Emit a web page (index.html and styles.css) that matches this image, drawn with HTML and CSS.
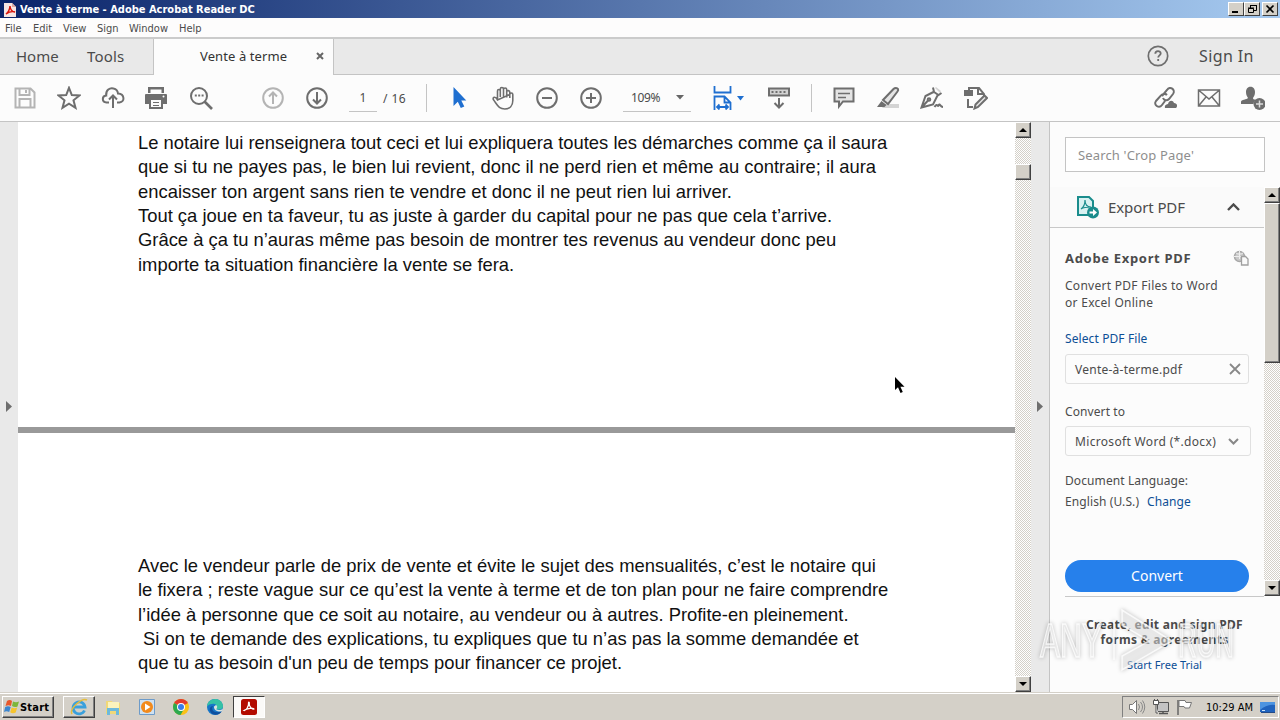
FILE: index.html
```
<!DOCTYPE html>
<html lang="en">
<head>
  <meta charset="UTF-8">
  <title>Vente à terme - Adobe Acrobat Reader DC</title>
  <link rel="stylesheet" href="styles.css">
</head>
<body>

<!-- Title bar -->
<div class="titlebar">
  <svg class="app-icon" width="12" height="15" viewBox="0 0 12 15"><path d="M0 1h8l4 4v10H0z" fill="#f6e6e4"/><path d="M8 1l4 4H8z" fill="#d9a9a4"/><path d="M2 12c2-1 4-5 4-8 0 3 2 6 5 6-3-1-6 0-9 2z" fill="none" stroke="#d8160c" stroke-width="1.5"/></svg>
  <span class="title-text">Vente à terme - Adobe Acrobat Reader DC</span>
  <div class="win-buttons">
    <span class="win-btn"><svg width="14" height="12"><path d="M3 9h6" stroke="#000" stroke-width="2"/></svg></span>
    <span class="win-btn"><svg width="14" height="12"><path d="M5.500 5V2.500h6v5H9M5 2.500h7" fill="none" stroke="#000"/><path d="M3.500 5.500h5v4h-5zM3 5h6" fill="none" stroke="#000"/></svg></span>
    <span class="win-btn close"><svg width="14" height="12"><path d="M3.500 2.500l7 7M10.500 2.500l-7 7" stroke="#000" stroke-width="1.700"/></svg></span>
  </div>
</div>

<!-- Menu -->
<div class="menubar">
  <span class="m-file">File</span><span class="m-edit">Edit</span><span class="m-view">View</span><span class="m-sign">Sign</span><span class="m-window">Window</span><span class="m-help">Help</span>
</div>

<!-- Tabs -->
<div class="tabs">
  <div class="tab-left"><span class="t-home">Home</span><span class="t-tools">Tools</span></div>
  <div class="tab-active"><span class="t-doc">Vente à terme</span><svg width="8" height="8"><path d="M1 1l6 6M7 1l-6 6" stroke="#666" stroke-width="2"/></svg></div>
  <div class="tab-right">
    <svg class="help" width="22" height="22" viewBox="0 0 22 22"><circle cx="11" cy="11" r="9.700" fill="none" stroke="#6e6e6e" stroke-width="1.700"/><path d="M8.300 8.700c0-3.500 5.400-3.300 5.400-.3 0 2-2.500 2-2.500 4.200M11.200 14v2" fill="none" stroke="#6e6e6e" stroke-width="1.800"/></svg>
    <span class="t-signin">Sign In</span>
  </div>
</div>

<!-- Toolbar -->
<div class="toolbar">
  <span class="tool off"><svg viewBox="0 0 24 24"><path d="M2.500 2.500h15l4 4v15h-19zM6.500 3v6h10V3M13 4v3M6.500 21v-8h11v8"/></svg></span>
  <span class="tool"><svg viewBox="0 0 24 24"><path d="M12 1.800l2.800 7.200 7.700.5-6 4.800 2 7.500L12 17.600l-6.500 4.200 2-7.500-6-4.800 7.700-.5z"/></svg></span>
  <span class="tool"><svg viewBox="0 0 24 24"><path d="M8 16.500H5.500C.5 16 .8 10 5.200 9.500 4.500 4 9 1.500 12.500 2.500c3 .6 4.200 2.500 4.500 5 7 .5 7 8.500 1.500 9H16M12 22V10M8 13.500l4-4 4 4"/></svg></span>
  <span class="tool print"><svg viewBox="0 0 24 24"><path class="solid" d="M4 1h16v6H4zM1 9q0-1 1-1h20q1 0 1 1v9H1z"/><path class="paper" d="M6.500 3.500h11V7h-11z"/><path d="M6 13h12v9H6z" class="sheet"/><path d="M9 16.500h6M9 19.500h6" stroke-width="1.200"/><circle cx="19.500" cy="10.500" r="1" fill="#fff" stroke="none"/></svg></span>
  <span class="tool"><svg viewBox="0 0 24 24"><circle cx="10" cy="10" r="8"/><path d="M15.500 15.500l7.500 7.500" stroke-width="2.700"/><path d="M5.800 9.500h2m1.400 0h2m1.400 0h2"/></svg></span>

  <span class="tool off nav"><svg viewBox="0 0 24 24"><circle cx="12" cy="12" r="9.800"/><path d="M12 18V7M8 10.500l4-4 4 4"/></svg></span>
  <span class="tool"><svg viewBox="0 0 24 24"><circle cx="12" cy="12" r="9.800"/><path d="M12 6v11M8 13.500l4 4 4-4"/></svg></span>
  <span class="page-input">1</span><span class="page-total">/ 16</span>
  <i class="sep"></i>

  <span class="tool"><svg viewBox="0 0 24 24"><path d="M6.500 1v19l4.300-4.300 3 6.300 3.500-1.600-3-6h5z" fill="#1f6fd0" stroke="none"/></svg></span>
  <span class="tool"><svg viewBox="0 0 24 24"><path d="M6.500 14V5c0-2 2.800-2 2.800 0v6V3c0-2 3.200-2 3.200 0v8V3.500c0-2 3.200-2 3.200 0V11.500M15.700 6c0-2 3.100-1.800 3.100.2V12M18.800 8.500c0-2 3-1.800 3 0v6c0 5-3 8.500-8 8.500-6 0-7-3.500-11.500-9.500C1.500 11 4.500 10 6.500 14z" stroke-width="1.600"/></svg></span>
  <span class="tool"><svg viewBox="0 0 24 24"><circle cx="12" cy="12" r="9.800"/><path d="M7 12h10"/></svg></span>
  <span class="tool"><svg viewBox="0 0 24 24"><circle cx="12" cy="12" r="9.800"/><path d="M7 12h10M12 7v10"/></svg></span>
  <span class="zoom-box"><span class="zoom-val">109%</span><svg width="8" height="5"><path d="M0 0h8L4 4.500z" fill="#666"/></svg></span>
  <span class="fit"><svg class="fit-icon" width="19" height="24" viewBox="0 0 19 24"><path d="M1.500 0v6.500h16V0M1.500 24V10.500h10l6 6V24M11.500 10.500v6h6M4 21h11M6.500 18.500L4 21l2.500 2.500M12.500 18.500L15 21l-2.500 2.500" fill="none" stroke="#1f6fd0" stroke-width="1.800"/></svg><svg width="7" height="5"><path d="M0 0h7L3.500 4.500z" fill="#1f6fd0"/></svg></span>
  <span class="tool"><svg viewBox="0 0 24 24"><path d="M2 2.500h20v7H2z" fill="#d2d2d2"/><path d="M4.500 6h2m2 0h2m2 0h2m2 0h2M12 12v9M7.500 17l4.500 4.500 4.500-4.500"/></svg></span>
  <i class="sep second"></i>

  <span class="tool"><svg viewBox="0 0 24 24"><path d="M2.500 2.500h19v13H11L7 20.500v-5H2.500z" fill="#e4e4e4"/><path d="M6 7.500h12M6 11.500h8" stroke-width="1.600"/></svg></span>
  <span class="tool"><svg viewBox="0 0 24 24"><path d="M9 18h14v4H6z" fill="#d4d4d4" stroke="none"/><path d="M20 2c1.800 0 3 1.500 1.500 3.500L12 18l-5-4L17.500 3c.8-.8 1.600-1 2.500-1z" fill="#e4e4e4"/><path class="solid" d="M5.500 15l5 4-2 2H1z"/></svg></span>
  <span class="tool"><svg viewBox="0 0 24 24"><path d="M15 2l5 5 1-2-5-4z" fill="#d4d4d4" stroke="none"/><path d="M13 1.500l1 4.500 4.500 3 3-2M13.500 6l-8 4-4 11.500L13 18.500l4.500-9M2 21l6-6.500"/><circle cx="9" cy="13.500" r="1.300"/><path d="M14.500 21c3-5 3 1 4.300-2 1-2 1.300 2 4.200 2"/></svg></span>
  <span class="tool"><svg viewBox="0 0 24 24"><path d="M5 4V2h10l5 6v2M14 2v6h6M4 13v8h5"/><path class="solid" d="M0 4h9v6H0z"/><path d="M10.500 22.500l1-4 9-9 2.500 2.500-9 9z" fill="#e4e4e4"/></svg></span>

  <div class="tool-end">
    <span class="tool"><svg viewBox="0 0 24 24"><path d="M9 10l5-6c3-5 9 0 6 4l-4 5c-2 2-5 1.500-6-1M14 9c-2-2-5-1-6 .5L3 15c-3 4 3 8 6 4l3-4"/><path class="solid" d="M12 22c-1-3 2-4 3-4 1-4 5-4 6-1 3 0 4 3 2 5z"/></svg></span>
    <span class="tool"><svg viewBox="0 0 24 24"><path d="M1.500 4h21v16h-21zM1.500 4L12 13 22.500 4M1.500 20L9 11M22.500 20L15 11" stroke-width="1.500"/></svg></span>
    <span class="tool"><svg viewBox="0 0 24 24"><path class="solid" d="M5 6c0-7 9-7 9 0 0 3-1 4-2 6 0 2 2 1 3 2-2 1-3 4-2 4H0v-2c0-3 6-2 7-4-1-2-2-3-2-6z"/><circle cx="18.500" cy="18" r="6" fill="#6e6e6e" stroke="none"/><path d="M15 18h7M18.500 14.500v7" class="plus"/></svg></span>
  </div>
</div>

<div class="workspace">
  <div class="rail"><svg width="6" height="11"><path d="M0 0v11l6-5.500z" fill="#6e6e6e"/></svg></div>

  <div class="document">
    <div class="page page-top">
      <p>Le notaire lui renseignera tout ceci et lui expliquera toutes les démarches comme ça il saura</p>
      <p>que si tu ne payes pas, le bien lui revient, donc il ne perd rien et même au contraire; il aura</p>
      <p>encaisser ton argent sans rien te vendre et donc il ne peut rien lui arriver.</p>
      <p>Tout ça joue en ta faveur, tu as juste à garder du capital pour ne pas que cela t’arrive.</p>
      <p>Grâce à ça tu n’auras même pas besoin de montrer tes revenus au vendeur donc peu</p>
      <p>importe ta situation financière la vente se fera.</p>
    </div>
    <div class="page page-bottom">
      <p>Avec le vendeur parle de prix de vente et évite le sujet des mensualités, c’est le notaire qui</p>
      <p>le fixera ; reste vague sur ce qu’est la vente à terme et de ton plan pour ne faire comprendre</p>
      <p>l’idée à personne que ce soit au notaire, au vendeur ou à autres. Profite-en pleinement.</p>
      <p class="indent">Si on te demande des explications, tu expliques que tu n’as pas la somme demandée et</p>
      <p>que tu as besoin d'un peu de temps pour financer ce projet.</p>
    </div>
  </div>

  <div class="scrollbar doc-scroll">
    <span class="sb-btn"><svg width="8" height="4"><path d="M0 4h8L4 0z"/></svg></span>
    <span class="sb-thumb"></span>
    <span class="sb-btn end"><svg width="8" height="4"><path d="M0 0h8L4 4z"/></svg></span>
  </div>

  <div class="rail right"><svg width="6" height="11"><path d="M0 0v11l6-5.500z" fill="#6e6e6e"/></svg></div>

  <div class="panel">
    <div class="search"><span>Search 'Crop Page'</span></div>
    <div class="panel-body">
      <div class="panel-content">
        <div class="export-head">
          <svg width="24" height="24" viewBox="0 0 24 24"><path d="M2 2h11l4 4v14H2z" fill="#d8f1f1" stroke="#1a8c8c" stroke-width="2"/><path d="M5 14c3-2 4-5 4-9 0 5 3 7 6 7-4 0-7 0-10 2z" fill="none" stroke="#1a8c8c" stroke-width="1.200"/><circle cx="17" cy="17.500" r="6" fill="#1a8c8c"/><path d="M13.500 16.500h3.500v-2.500l4 3.500-4 3.500v-2.500h-3.500z" fill="#fff"/></svg>
          <span class="export-title">Export PDF</span>
          <svg class="chev" width="13" height="8"><path d="M1 7l5.500-5.500L12 7" fill="none" stroke="#4b4b4b" stroke-width="2.400"/></svg>
        </div>
        <div class="export-form">
          <div class="form-title"><b>Adobe Export PDF</b>
            <svg width="16" height="16"><circle cx="6.500" cy="6.500" r="5" fill="#c9c9c9" stroke="#a8a8a8" stroke-width="1.500"/><path d="M1 6.500h8M6.500 1v8M3 3c2 1.500 5 1.500 7 0" stroke="#eee" fill="none"/><path d="M8.500 6.500h4l2.500 2.500v6H8.500z" fill="#fafafa" stroke="#a0a0a0" stroke-width="1.300"/></svg>
          </div>
          <div class="desc">Convert PDF Files to Word<br>or Excel Online</div>
          <div class="line select-link"><span class="link">Select PDF File</span></div>
          <div class="field file"><span>Vente-à-terme.pdf</span><svg width="12" height="12"><path d="M1 1l10 10M11 1L1 11" stroke="#888" stroke-width="1.800"/></svg></div>
          <div class="line convert-label"><span>Convert to</span></div>
          <div class="field format"><span>Microsoft Word (*.docx)</span><svg width="11" height="7"><path d="M1 1l4.500 4.500L10 1" fill="none" stroke="#888" stroke-width="2"/></svg></div>
          <div class="line lang-label"><span>Document Language:</span></div>
          <div class="line lang"><span class="l-en">English (U.S.)</span><span class="link">Change</span></div>
          <div class="convert-btn"><span>Convert</span></div>
        </div>
      </div>
      <div class="scrollbar panel-scroll">
        <span class="sb-btn"><svg width="8" height="4"><path d="M0 4h8L4 0z"/></svg></span>
        <span class="sb-thumb tall"></span>
        <span class="sb-btn end"><svg width="8" height="4"><path d="M0 0h8L4 4z"/></svg></span>
      </div>
    </div>
    <div class="promo">
      <b>Create, edit and sign PDF</b>
      <b>forms &amp; agreements</b>
      <span class="link promo-link">Start Free Trial</span>
    </div>
  </div>
</div>

<!-- Taskbar -->
<div class="taskbar">
  <div class="start">
    <svg width="16" height="16" viewBox="0 0 16 16"><path d="M3 2c2-1.500 4-1 5 0L7 7C5 6 4 6 1.500 7z" fill="#e8582b"/><path d="M9 2.500c2 1 4 1 6 0l-1.500 5c-2 1-4 .5-5.500-.5z" fill="#7db63b"/><path d="M1.200 8c2-1 4-.8 5.500 0l-1.500 5c-2-1-3.500-1-5.200 0z" fill="#3c86cf"/><path d="M7.700 8.500c2 1 3.700 1 5.500 0l-1.500 5c-2 1-4 .8-5.500-.3z" fill="#f6c42d"/></svg>
    <b>Start</b>
  </div>
  <div class="task raised"><svg width="18" height="18" viewBox="0 0 18 18"><path d="M14.500 12.500A6 6 0 1 1 15 9H4" fill="none" stroke="#3aa0dc" stroke-width="2.800"/><path d="M2 16C-1 11 12-1 17 2" fill="none" stroke="#e5bd3c" stroke-width="1.500"/></svg></div>
  <div class="task"><svg width="18" height="18" viewBox="0 0 18 18"><path d="M2 3h6l1 2h7v11H2z" fill="#f0d878"/><path d="M4 4h11v6H4z" fill="#fbf3bd"/><path d="M3 17v-7h12v7h-3v-4H6v4z" fill="#6db9dc"/></svg></div>
  <div class="task"><svg width="18" height="18" viewBox="0 0 18 18"><path d="M1.500 1.500h15v15h-15z" fill="#cfe1f1" stroke="#6d9bc9"/><circle cx="9" cy="9" r="6" fill="#f28a1c"/><path d="M7 5.500v7L12.500 9z" fill="#fff"/></svg></div>
  <div class="task"><svg width="18" height="18" viewBox="0 0 18 18"><circle cx="9" cy="9" r="8" fill="#fbc116"/><path d="M9 9L2.100 5A8 8 0 0 1 15.900 5z" fill="#e33b2e"/><path d="M9 9L2.100 5A8 8 0 0 0 8.500 17l3.500-6z" fill="#2da94f"/><circle cx="9" cy="9" r="4" fill="#fff"/><circle cx="9" cy="9" r="3" fill="#3b7de9"/></svg></div>
  <div class="task"><svg width="18" height="18" viewBox="0 0 18 18"><circle cx="9" cy="9" r="8" fill="#1676c8"/><path d="M1 9C1-1 16-2 17 8c0 4-5 4-7 3 2-4-1-6-4-5-3 0-5 2-5 3z" fill="#35c1a5"/><path d="M7 8c-3 5 3 8 9 5-2 4-9 6-12 0-1-3 1-5 3-5z" fill="#0f4f9e"/><path d="M10 7c2 1 1 3 .3 4.300 2 1.500 5 .7 6.700-.8l-.7 2.800C12 14.500 7.500 12 8 8.500z" fill="#d8e2e0"/></svg></div>
  <div class="task pressed"><svg width="16" height="16" viewBox="0 0 16 16"><rect width="16" height="16" rx="2.500" fill="#b30b00"/><path d="M3 11.500C5 12 8 7 7.500 4c0-1.500 1.300-1 .8 1C8 8 12 11 13 10c0-1.500-7-.5-10 1.500z" fill="none" stroke="#fff" stroke-width="1.200"/></svg></div>
  <div class="tray">
    <svg width="18" height="16" viewBox="0 0 18 16"><path d="M1.500 5.500h3l4-4v13l-4-4h-3z" fill="#fff" stroke="#777"/><path d="M10.500 5q2 3 0 6M12.500 3q4 5 0 10M14.500 1.500q4.500 6.500 0 13" fill="none" stroke="#888"/></svg>
    <svg width="16" height="16" viewBox="0 0 16 16"><path d="M4.500 3.500h11v9h-11z" fill="#c4c4c4" stroke="#555"/><path d="M6 14.500h9M10 13v2" stroke="#555" stroke-width="1.500"/><path d="M.5 1.500h5v4h-5zM3 5v9h2M1.500 0v2M4.500 0v2" fill="#fff" stroke="#555"/></svg>
    <svg width="17" height="16" viewBox="0 0 17 16"><path d="M2 1v15" stroke="#666" stroke-width="1.500"/><path d="M3 1.500h6l1 2h5.500l-2 5.500H9l-1-1.500H3z" fill="#fff" stroke="#777"/></svg>
    <span class="clock">10:29 AM</span>
    <svg class="desk" width="16" height="13"><path d="M0 1h15v10H0z" fill="#2063bd"/><path d="M0 1h15v3Q7 3 0 9z" fill="#4d94e0"/><path d="M1 11.500h14" stroke="#234a86"/><path d="M2 9.500h3" stroke="#c9e2fa"/></svg>
  </div>
</div>

<svg class="pointer" width="10" height="17" viewBox="0 0 10 17"><path d="M0 0v13l3-2.700L5.500 16l2.300-1-2.400-5.300H9.500z"/></svg>

<svg class="watermark" width="230" height="76" viewBox="0 0 230 76">
  <text x="4" y="51" textLength="62" lengthAdjust="spacingAndGlyphs">ANY</text>
  <path d="M86 4l50 31-50 29V50l27-15-27-16z"/>
  <path d="M78 14v40"/>
  <text x="142" y="51" textLength="56" lengthAdjust="spacingAndGlyphs">RUN</text>
</svg>

</body>
</html>
```
FILE: styles.css
```
* {
  box-sizing: border-box;
}
body {
  margin: 0;
  width: 1280px;
  height: 720px;
  overflow: hidden;
  display: flex;
  flex-direction: column;
  background: #fcfcfc;
  color: #4b4b4b;
  font-family: "Noto Sans", "Open Sans", sans-serif;
  font-size: 12px;
  white-space: nowrap;
}
svg {
  display: block;
  flex: none;
}

/* title bar */
.titlebar {
  height: 18px;
  flex: none;
  display: flex;
  align-items: center;
  padding: 0 2px 0 4px;
  background: linear-gradient(90deg, #0a246a, #a6caf0);
}
.title-text {
  margin-left: 4px;
  color: #fff;
  font: bold 11px "DejaVu Sans Condensed", "DejaVu Sans", sans-serif;
}
.win-buttons {
  margin-left: auto;
  display: flex;
}
.win-btn {
  width: 16px;
  height: 14px;
  background: #d4d0c8;
  border: 1px solid;
  border-color: #fff #404040 #404040 #fff;
}
.win-btn.close {
  margin-left: 2px;
}

/* menu */
.menubar {
  height: 21px;
  flex: none;
  display: flex;
  align-items: center;
  padding: 1px 0 0 5px;
  border-bottom: 2px solid #cbcbcb;
  background: #fdfcfc;
  font: 11px "DejaVu Sans Condensed", "DejaVu Sans", sans-serif;
}
.menubar span {
  flex: none;
}
.m-file { width: 28px; }
.m-edit { width: 30px; }
.m-view { width: 34px; }
.m-sign { width: 32px; }
.m-window { width: 50px; }

/* tabs */
.tabs {
  height: 36px;
  flex: none;
  display: flex;
  background: #e9e9e9;
  font-size: 15px;
}
.tab-left, .tab-active, .tab-right {
  display: flex;
  align-items: center;
  padding-bottom: 2px;
}
.tab-left {
  width: 154px;
  padding-left: 16px;
  border-right: 1px solid #c4c4c4;
  border-bottom: 1px solid #c4c4c4;
}
.t-home {
  width: 71px;
}
.t-tools {
  letter-spacing: 0.2px;
}
.tab-active {
  width: 179px;
  padding-left: 46px;
  background: #fcfcfc;
  color: #333;
  font-size: 13px;
}
.t-doc {
  width: 116px;
  letter-spacing: 0.1px;
}
.tab-right {
  flex: 1;
  justify-content: flex-end;
  border-left: 1px solid #c4c4c4;
  border-bottom: 1px solid #c4c4c4;
}
.t-signin {
  width: 81px;
  margin-left: 30px;
  font-size: 16px;
  letter-spacing: 0.4px;
}

/* toolbar */
.toolbar {
  height: 47px;
  flex: none;
  display: flex;
  align-items: center;
  padding-left: 3px;
  border-bottom: 1px solid #c4c4c4;
}
.tool {
  width: 44px;
  flex: none;
  display: flex;
  justify-content: center;
}
.tool svg {
  width: 24px;
  height: 24px;
  fill: none;
  stroke: #6e6e6e;
  stroke-width: 2;
}
.tool.print {
  padding-right: 2px;
}
.tool.off svg {
  stroke: #b4b4b4;
}
.tool .solid {
  fill: #6e6e6e;
  stroke: none;
}
.tool .paper {
  fill: #fcfcfc;
  stroke: none;
}
.tool .sheet {
  fill: #fcfcfc;
}
.tool .plus {
  stroke: #ddd;
  stroke-width: 1.5;
}
.nav {
  margin-left: 28px;
}
.page-input {
  width: 28px;
  height: 28px;
  margin-left: 10px;
  border-bottom: 1px solid #c4c4c4;
  line-height: 28px;
  text-align: center;
}
.page-total {
  width: 43px;
  margin-left: 6px;
  letter-spacing: 0.4px;
}
.sep {
  width: 1px;
  height: 28px;
  margin-right: 10px;
  background: #c4c4c4;
}
.sep.second {
  margin-left: 10px;
}
.zoom-box {
  width: 68px;
  height: 28px;
  margin-left: 10px;
  padding-left: 8px;
  display: flex;
  align-items: center;
  border-bottom: 1px solid #c4c4c4;
}
.zoom-val {
  width: 45px;
  letter-spacing: -0.4px;
}
.fit {
  width: 66px;
  padding-left: 22px;
  display: flex;
  align-items: center;
  gap: 5px;
}
.tool-end {
  margin-left: auto;
  padding-right: 5px;
  display: flex;
}

/* workspace */
.workspace {
  height: 570px;
  flex: none;
  display: flex;
}
.rail {
  width: 18px;
  flex: none;
  display: flex;
  align-items: center;
  padding: 0 0 1px 6px;
  background: #e9e9e9;
}
.rail.right {
  width: 19px;
  border-right: 1px solid #c4c4c4;
}
.document {
  width: 997px;
  background: #999;
  color: #111;
  font: 18.4px/24.33px "Liberation Sans", Arial, sans-serif;
}
.page {
  padding-left: 120px;
  background: #fff;
}
.page p {
  margin: 0;
}
.page .indent {
  padding-left: 5px;
}
.page-top {
  height: 305px;
  padding-top: 9px;
}
.page-bottom {
  height: 259px;
  margin-top: 6px;
  padding-top: 121px;
}

/* classic scrollbars */
.scrollbar {
  width: 16px;
  flex: none;
  display: flex;
  flex-direction: column;
  background: repeating-conic-gradient(#d4d0c8 0 25%, #fff 0 50%) 0 0 / 2px 2px;
}
.sb-btn, .sb-thumb {
  height: 16px;
  flex: none;
  display: flex;
  align-items: center;
  justify-content: center;
  background: #d4d0c8;
  border: 1px solid;
  border-color: #fff #404040 #404040 #fff;
  box-shadow: inset -1px -1px #808080;
}
.doc-scroll .sb-thumb {
  margin-top: 26px;
}
.sb-thumb.tall {
  height: 160px;
}
.sb-btn.end {
  margin-top: auto;
}

/* right panel */
.panel {
  width: 230px;
  display: flex;
  flex-direction: column;
}
.search {
  width: 200px;
  height: 35px;
  margin: 15px 0 15px 15px;
  padding-left: 12px;
  border: 1px solid #c4c4c4;
  background: #fff;
  color: #8e8e8e;
  font-size: 13px;
  letter-spacing: 0.15px;
  line-height: 34px;
}
.panel-body {
  height: 409px;
  display: flex;
}
.panel-content {
  width: 214px;
}
.export-head {
  height: 41px;
  display: flex;
  align-items: center;
  padding-left: 26px;
  border-bottom: 1px solid #c8c8c8;
  background: #fafafa;
}
.export-title {
  width: 119px;
  margin-left: 8px;
  font-size: 15px;
  letter-spacing: -0.1px;
}
.export-form {
  padding: 20px 15px 0;
}
.form-title {
  height: 20px;
  display: flex;
  align-items: center;
  justify-content: space-between;
  font-size: 13px;
  letter-spacing: 0.68px;
}
.desc {
  margin-top: 9px;
  letter-spacing: 0.28px;
  line-height: 17px;
}
.line {
  height: 16px;
  line-height: 18px;
  letter-spacing: 0.1px;
}
.link {
  color: #0d4f96;
}
.select-link {
  margin-top: 19px;
}
.field {
  width: 184px;
  height: 30px;
  padding: 0 7px 0 9px;
  display: flex;
  align-items: center;
  justify-content: space-between;
  border: 1px solid #e0e0e0;
  border-radius: 3px;
  letter-spacing: 0.25px;
}
.file {
  margin-top: 8px;
}
.convert-label {
  margin-top: 19px;
}
.format {
  width: 186px;
  margin-top: 7px;
  padding: 1px 11px 0 9px;
  letter-spacing: 0.33px;
}
.lang-label {
  margin-top: 16px;
}
.lang {
  margin-top: 5px;
  display: flex;
}
.l-en {
  width: 82px;
}
.convert-btn {
  height: 32px;
  margin-top: 51px;
  border-radius: 16px;
  background: #2680eb;
  color: #fff;
  font-size: 14px;
  line-height: 31px;
  text-align: center;
}
.promo {
  margin: 0 16px 0 15px;
  height: 96px;
  padding-top: 20px;
  display: flex;
  flex-direction: column;
  align-items: center;
  border-top: 1px solid #c8c8c8;
  line-height: 15px;
}
.promo b {
  letter-spacing: 0.3px;
}
.promo-link {
  margin-top: 10px;
  font-size: 11px;
}

/* taskbar */
.taskbar {
  height: 28px;
  flex: none;
  display: flex;
  align-items: center;
  padding: 1px 1px 0 2px;
  border-top: 1px solid #d4d0c8;
  box-shadow: inset 0 1px #fff;
  background: #d4d0c8;
  color: #000;
  font-family: "DejaVu Sans Condensed", "DejaVu Sans", sans-serif;
  font-size: 11px;
}
.start {
  width: 52px;
  height: 22px;
  margin-right: 9px;
  padding-left: 1px;
  display: flex;
  align-items: center;
}
.start b {
  letter-spacing: 0.2px;
}
.start, .raised {
  border: 1px solid;
  border-color: #fff #404040 #404040 #fff;
  box-shadow: inset -1px -1px #808080;
}
.task {
  width: 32px;
  height: 22px;
  margin-right: 2px;
  display: flex;
  align-items: center;
  justify-content: center;
}
.pressed {
  border: 1px solid;
  border-color: #404040 #fff #fff #404040;
  background: #fbfaf8;
}
.tray {
  width: 157px;
  height: 22px;
  margin-left: auto;
  padding-left: 5px;
  display: flex;
  align-items: center;
  gap: 7px;
  border: 1px solid;
  border-color: #808080 #fff #fff #808080;
}
.clock {
  width: 47px;
  margin-left: 6px;
}

/* things lying over the window */
.pointer {
  position: absolute;
  left: 895px;
  top: 377px;
}
.watermark {
  position: absolute;
  left: 1036px;
  top: 606px;
  fill: rgba(255, 255, 255, 0.45);
  stroke: rgba(255, 255, 255, 0.75);
  stroke-width: 1.5;
  filter: drop-shadow(0 0 2px rgba(0, 0, 0, 0.35));
  font: 49px "Liberation Sans", Arial, sans-serif;
}
```
